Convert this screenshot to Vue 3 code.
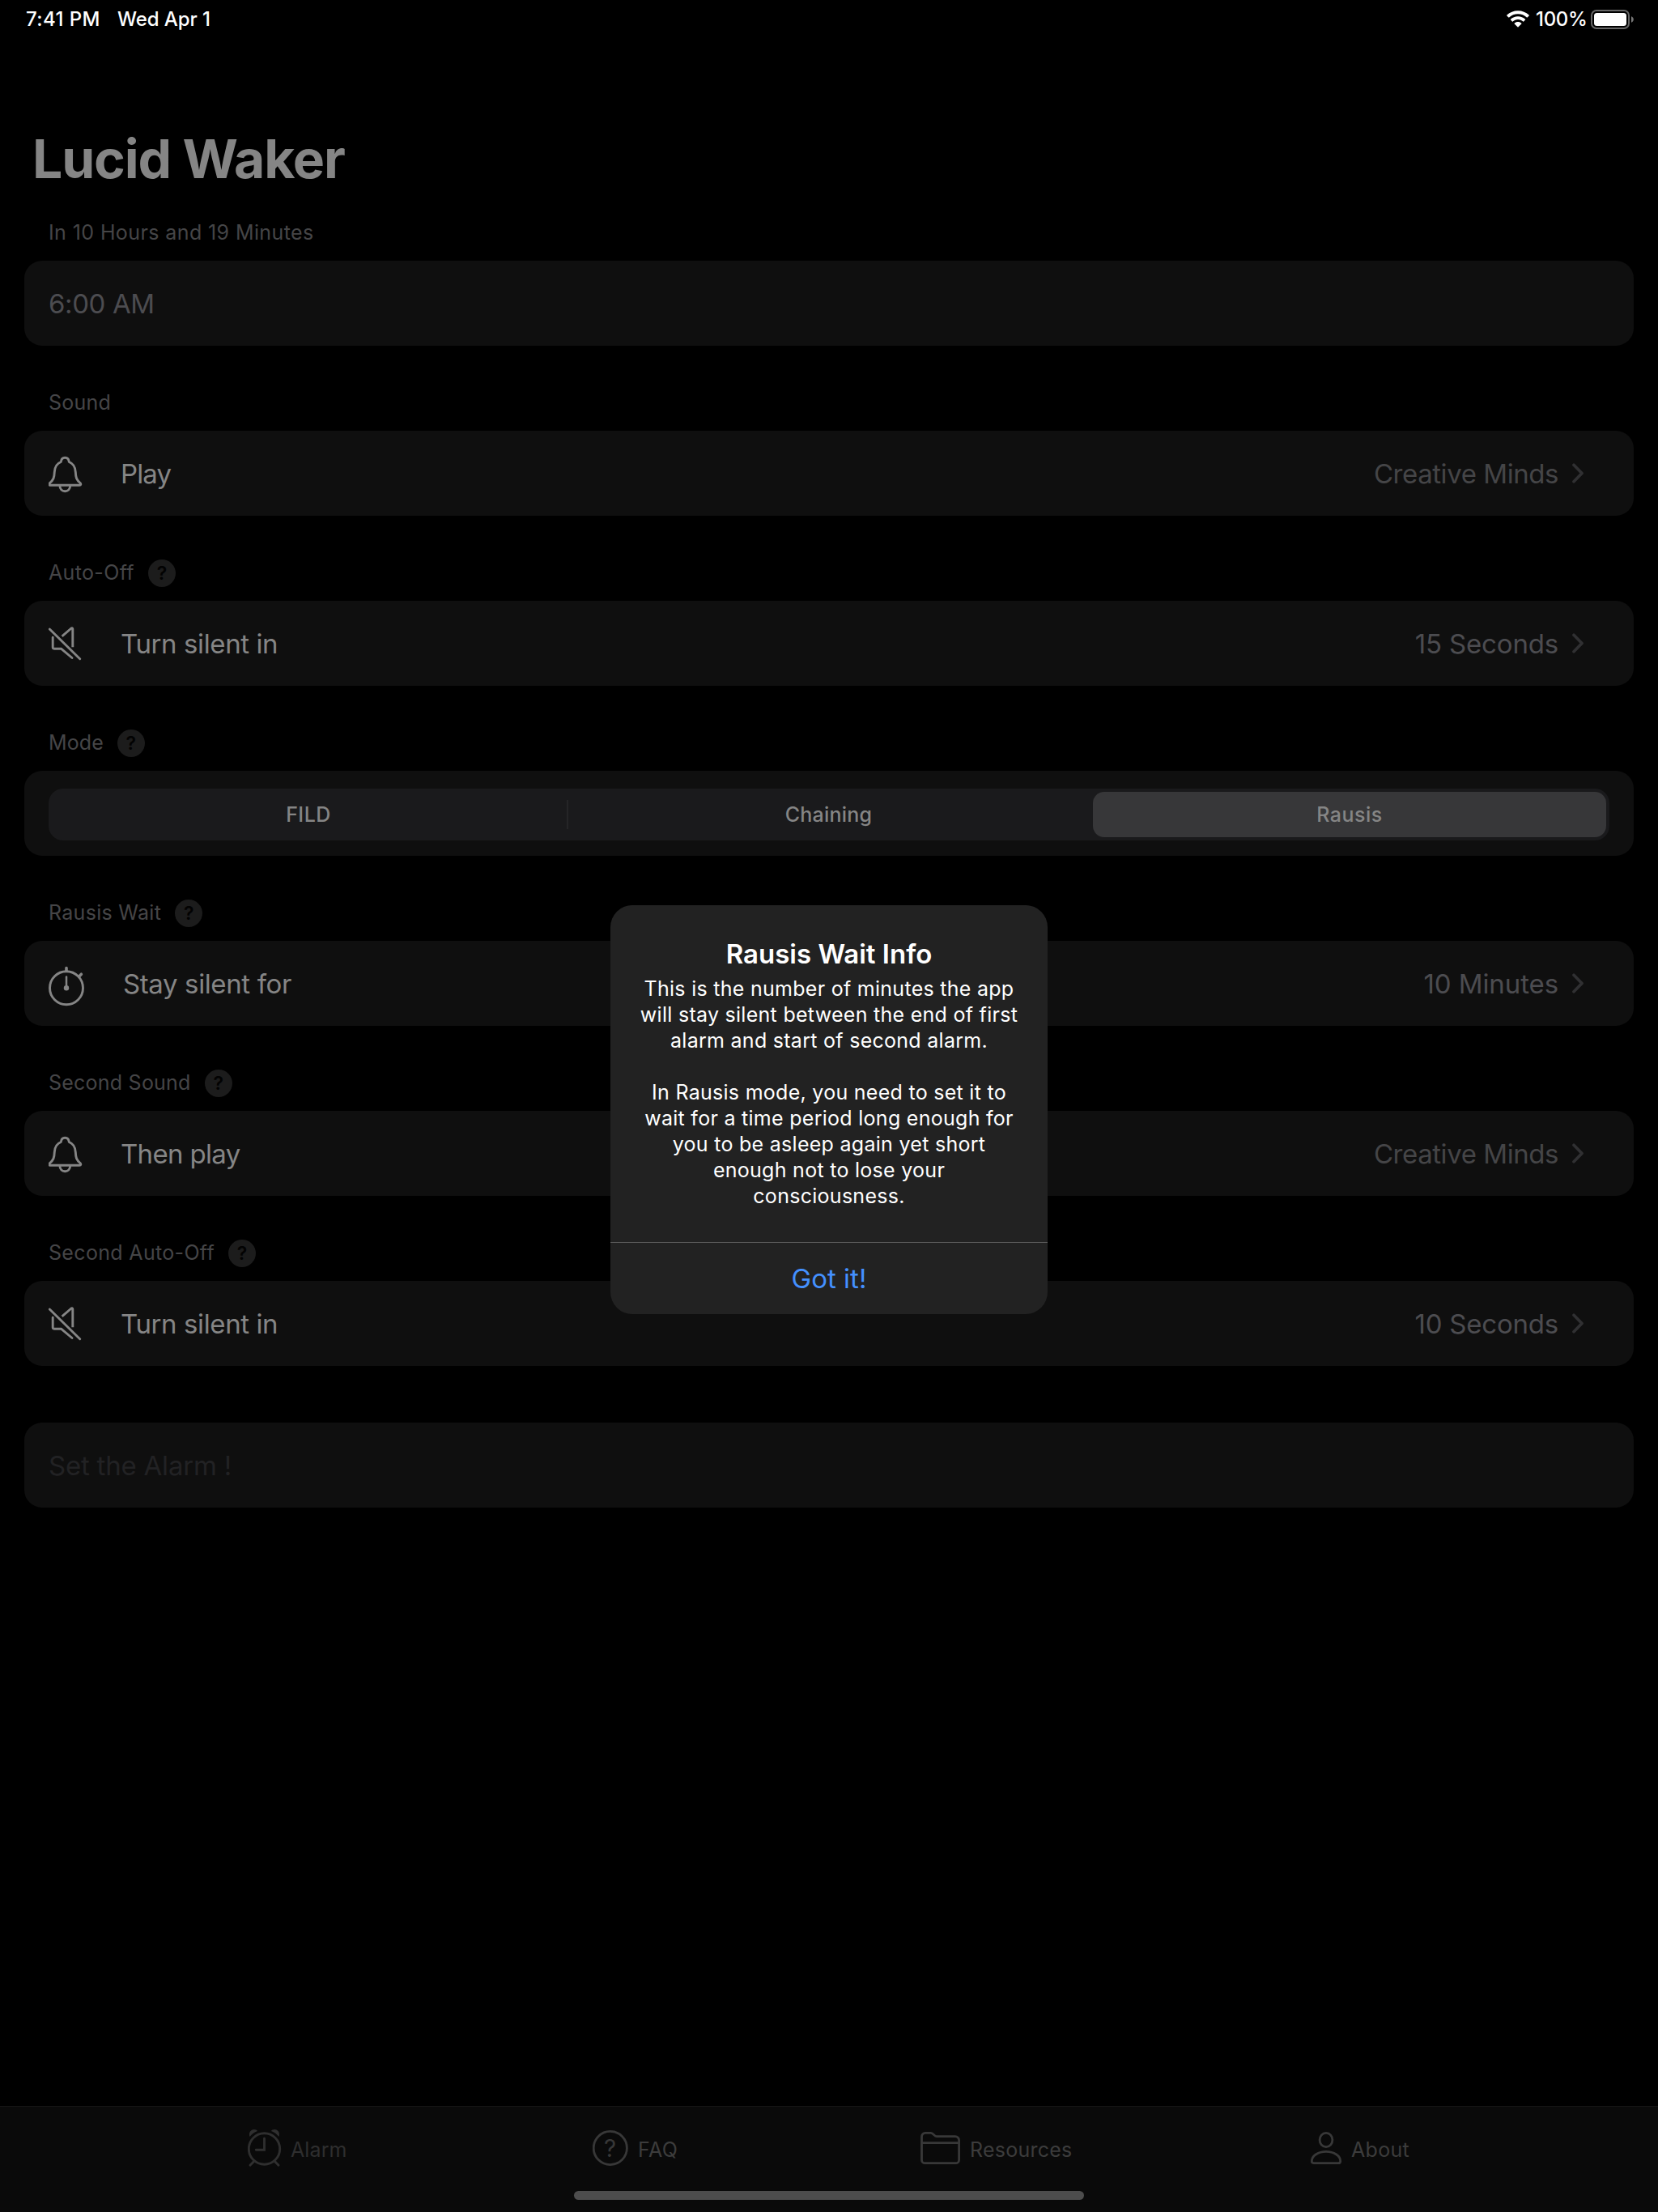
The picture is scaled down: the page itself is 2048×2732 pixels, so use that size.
<script setup>
const sections = [
  { label: 'In 10 Hours and 19 Minutes', ls: 0.4, kind: 'time', title: '6:00 AM', tls: -0.4 },
  { label: 'Sound', ls: 0.23, kind: 'row', icon: 'bell', title: 'Play', tls: -0.9, value: 'Creative Minds', vls: -0.44 },
  { label: 'Auto-Off', ls: 0.35, help: true, kind: 'row', icon: 'mute', title: 'Turn silent in', tls: -0.4, value: '15 Seconds', vls: -0.17, cool: true },
  { label: 'Mode', ls: 0.1, help: true, kind: 'segments' },
  { label: 'Rausis Wait', ls: 0.3, help: true, kind: 'row', icon: 'timer', title: 'Stay silent for', tls: -0.38, value: '10 Minutes', vls: -0.1, cool: true },
  { label: 'Second Sound', ls: 0.23, help: true, kind: 'row', icon: 'bell', title: 'Then play', tls: -0.68, value: 'Creative Minds', vls: -0.44 },
  { label: 'Second Auto-Off', ls: 0.33, help: true, kind: 'row', icon: 'mute', title: 'Turn silent in', tls: -0.4, value: '10 Seconds', vls: -0.22, cool: true }
]
const message = [
  'This is the number of minutes the app',
  'will stay silent between the end of first',
  'alarm and start of second alarm.',
  '',
  'In Rausis mode, you need to set it to',
  'wait for a time period long enough for',
  'you to be asleep again yet short',
  'enough not to lose your',
  'consciousness.'
]
const spacing = (v) => ({ letterSpacing: v + 'px' })
</script>

<template>
  <div class="screen">
    <header class="status">
      <span class="clock">7:41 PM</span>
      <span class="date">Wed Apr 1</span>
      <span class="grow"></span>
      <svg class="wifi" width="28" height="22" viewBox="0 0 28 22" fill="#fff">
        <path d="M14 .2C8.700 .2 4 2.200.4 5.600a.6.6 0 0 0 0 .9L2.300 8.400a.6.6 0 0 0 .8 0C6 5.700 9.800 4.200 14 4.200s8 1.500 10.900 4.200a.6.6 0 0 0 .8 0l1.900-1.900a.6.6 0 0 0 0-.9C24 2.200 19.300 .2 14 .2z" />
        <path d="M14 7.200c-3.500 0-6.600 1.300-9 3.500a.6.6 0 0 0 0 .9l1.900 1.900a.6.6 0 0 0 .8 0C9.400 12 11.600 11 14 11s4.600 1 6.300 2.500a.6.6 0 0 0 .8 0l1.900-1.900a.6.6 0 0 0 0-.9c-2.400-2.200-5.500-3.500-9-3.500z" />
        <path d="M14 14c-1.700 0-3.200.7-4.300 1.700a.6.6 0 0 0 0 .9l3.800 3.700a.7.700 0 0 0 1 0l3.800-3.700a.6.6 0 0 0 0-.9C17.200 14.700 15.700 14 14 14z" />
      </svg>
      <span class="percent">100%</span>
      <svg class="battery" width="53" height="24" viewBox="0 0 53 24">
        <rect x="1" y="1" width="46" height="22" rx="6" fill="none" stroke="#666" stroke-width="2" />
        <rect x="4" y="4" width="40" height="16" rx="3.500" fill="#fff" />
        <path d="M50 8.200c1.700.6 2.800 2 2.800 3.800s-1.100 3.200-2.800 3.800z" fill="#777" />
      </svg>
    </header>

    <h1 class="title">Lucid Waker</h1>

    <main>
      <section v-for="s in sections" :key="s.label" class="section">
        <div class="label">
          <span :style="spacing(s.ls)">{{ s.label }}</span>
          <span v-if="s.help" class="help">?</span>
        </div>

        <div v-if="s.kind === 'segments'" class="card segcard">
          <div class="segments">
            <span class="seg fild">FILD</span>
            <span class="divider"></span>
            <span class="seg chain">Chaining</span>
            <span class="seg on">Rausis</span>
          </div>
        </div>

        <div v-else class="card">
          <svg v-if="s.icon" class="icon" width="89" height="105" viewBox="0 0 89 105" fill="none" stroke="#858585" stroke-width="2.900" stroke-linecap="round" stroke-linejoin="round">
            <template v-if="s.icon === 'bell'">
              <path d="M15.300 38.500C15.500 35.500 17.300 33.200 20.300 33.200s4.800 2.300 5 5.300C30.500 40.500 33 45 33.300 51c.3 7 1.200 9.500 5.700 13.500 1.300 1.500 1 2.800-.8 2.800H2.400c-1.800 0-2.100-1.300-.8-2.800C6.100 60.500 7 58 7.300 51 7.600 45 10.100 40.500 15.300 38.500z" />
              <path d="M13.900 68.300c.2 4 3 6.500 6.400 6.500s6.200-2.500 6.400-6.500" />
            </template>
            <template v-else-if="s.icon === 'mute'">
              <path d="M1.300 35 38.700 71.700" />
              <path d="M16.600 43.800 28 34c1-.8 1.800-.3 1.800.8V57.300" stroke-linecap="butt" />
              <path d="M5.200 45.200V57.600c0 1 .6 1.600 1.600 1.600H15.500L29 70.500" />
            </template>
            <template v-else>
              <circle cx="22" cy="58.300" r="20.500" />
              <path d="M22 33.500V37M37.700 44l2.700-2.800" stroke-width="3.600" />
              <path d="M22 44.500V58" stroke-width="2.500" />
              <circle cx="22" cy="58.300" r="3.200" fill="#858585" stroke="none" />
            </template>
          </svg>
          <span class="name" :class="{ time: s.kind === 'time', late: s.icon === 'timer' }" :style="spacing(s.tls)">{{ s.title }}</span>
          <template v-if="s.value">
            <span class="grow"></span>
            <span class="value" :class="{ cool: s.cool }" :style="spacing(s.vls)">{{ s.value }}</span>
            <svg class="chevron" width="14" height="25" viewBox="0 0 14 25" fill="none" stroke="#303032" stroke-width="3.700" stroke-linecap="round" stroke-linejoin="round">
              <path d="M2 2.300 12 12.500 2 22.700" />
            </svg>
          </template>
        </div>
      </section>

      <div class="card submit"><span>Set the Alarm !</span></div>
    </main>

    <nav class="tabs">
      <div class="tab alarm">
        <svg width="53" height="108" viewBox="0 0 53 108" fill="none" stroke="#2f2f2f" stroke-width="2.900" stroke-linecap="round">
          <circle cx="20.500" cy="53" r="19.200" />
          <path d="M20.500 40.200V54.300H10.300" />
          <path d="M3 73.200 7.300 68.700M38 73.200l-4.300-4.500" />
          <path d="M2.600 38C.6 33.500 3.500 29 8 29c1.800 0 3.500.8 4.100 1.900C8.200 32.300 5 34.600 2.600 38zM38.400 38C40.400 33.500 37.500 29 33 29c-1.800 0-3.500.8-4.100 1.900C32.800 32.300 36 34.600 38.400 38z" fill="#2f2f2f" stroke="none" />
        </svg>
        <span>Alarm</span>
      </div>
      <div class="tab faq">
        <svg width="56" height="108" viewBox="0 0 56 108">
          <circle cx="21.800" cy="52" r="20.600" fill="none" stroke="#383838" stroke-width="2.800" />
          <text x="21.800" y="63" text-anchor="middle" font-family="Inter, sans-serif" font-size="29.500" fill="#383838">?</text>
        </svg>
        <span>FAQ</span>
      </div>
      <div class="tab res">
        <svg width="61" height="108" viewBox="0 0 61 108" fill="none" stroke="#383838" stroke-width="2.800" stroke-linejoin="round">
          <path d="M1.500 38a4.500 4.500 0 0 1 4.500-4.600H12.800C16 33.400 17 37.700 20 37.700H42.800a4.800 4.800 0 0 1 4.800 4.800V66.700a4 4 0 0 1-4 4H5.500a4 4 0 0 1-4-4zM1.500 45.700H47.600" />
        </svg>
        <span>Resources</span>
      </div>
      <div class="tab about">
        <svg width="50" height="108" viewBox="0 0 50 108" fill="none" stroke="#383838" stroke-width="2.800" stroke-linejoin="round">
          <ellipse cx="19" cy="42" rx="7.900" ry="8.700" />
          <path d="M4 70.700H34c2 0 2.700-1.200 2.700-2.500C36.700 61.500 28.500 56.300 19 56.300S1.300 61.500 1.300 68.200c0 1.300.7 2.500 2.700 2.500z" />
        </svg>
        <span>About</span>
      </div>
    </nav>
    <div class="home"></div>

    <div class="alert" role="dialog">
      <h2>Rausis Wait Info</h2>
      <p v-for="(line, i) in message" :key="i">{{ line }}</p>
      <button type="button">Got it!</button>
    </div>
  </div>
</template>

<style>
html, body { margin: 0; background: #000; }
</style>

<style scoped>
.screen {
  position: relative;
  box-sizing: border-box;
  display: flex;
  flex-direction: column;
  width: 2048px;
  height: 2732px;
  overflow: hidden;
  background: #000;
  font-family: Inter, "Liberation Sans", sans-serif;
  white-space: nowrap;
}
.grow { flex: 1; }
.status {
  display: flex;
  align-items: center;
  height: 47px;
  padding: 0 30px 0 32px;
  font-size: 24px;
  font-weight: 500;
  line-height: 47px;
  color: #fff;
}
.clock { width: 113px; letter-spacing: 0.4px; }
.date { letter-spacing: -0.1px; }
.wifi { margin-right: 8px; }
.percent { width: 68px; letter-spacing: -0.3px; }
.title {
  margin: 109px 0 16px 40px;
  font-size: 66px;
  font-weight: 700;
  line-height: 80px;
  letter-spacing: -1.15px;
  color: #858585;
}
main { padding: 0 30px; }
.section { margin-bottom: 35px; }
.label {
  display: flex;
  align-items: center;
  height: 70px;
  padding-left: 30px;
  font-size: 25px;
  color: #454547;
}
.help {
  width: 34px;
  height: 34px;
  margin: 2px 0 0 17px;
  border-radius: 50%;
  background: #1c1c1c;
  color: #020202;
  font-size: 23px;
  font-weight: 600;
  line-height: 34px;
  text-align: center;
}
.card {
  box-sizing: border-box;
  display: flex;
  align-items: center;
  height: 105px;
  padding: 0 62px 0 30px;
  border-radius: 22px;
  background: #0f0f0f;
  font-size: 33px;
}
.icon { flex: none; }
.name { color: #858585; }
.name.time { color: #4c4c50; }
.name.late { margin-left: 3px; }
.value { margin-right: 17px; color: #454547; }
.value.cool { color: #4c4c50; }
.segcard { padding: 0 30px; }
.segments {
  display: flex;
  align-items: center;
  box-sizing: border-box;
  width: 100%;
  height: 64px;
  margin-top: 2px;
  padding: 4px;
  border-radius: 18px;
  background: #1a1a1c;
  font-size: 25px;
  font-weight: 500;
  color: #858585;
}
.seg { text-align: center; }
.fild { width: 636px; letter-spacing: 0.5px; text-indent: -2px; }
.divider { width: 2px; height: 36px; background: #252527; }
.chain { width: 648px; letter-spacing: 0.2px; text-indent: -5px; }
.on {
  flex: 1;
  height: 56px;
  line-height: 56px;
  border-radius: 14px;
  background: #373739;
  letter-spacing: 0.5px;
}
.submit { margin-top: 70px; color: #222224; letter-spacing: -0.22px; }
.tabs {
  display: grid;
  grid-template-columns: 426px 405px 482px 1fr;
  box-sizing: border-box;
  height: 131px;
  margin-top: auto;
  padding-left: 306px;
  background: #0a0a0a;
  box-shadow: inset 0 1px #151515;
  font-size: 25px;
  color: #3c3c3c;
}
.tab { display: flex; align-items: center; height: 108px; }
.alarm { color: #2e2e2e; letter-spacing: 0.1px; }
.faq { letter-spacing: 0.4px; }
.res { letter-spacing: 0.25px; }
.about { letter-spacing: 0.3px; }
.home {
  position: absolute;
  left: 709px;
  top: 2706px;
  width: 630px;
  height: 11px;
  border-radius: 6px;
  background: #4d4d4d;
}
.alert {
  position: absolute;
  left: 754px;
  top: 1118px;
  box-sizing: border-box;
  width: 540px;
  height: 505px;
  padding-top: 40px;
  border-radius: 27px;
  background: #222;
  color: #fff;
  text-align: center;
}
.alert h2 {
  margin: 0 0 7px;
  font-size: 33px;
  font-weight: 600;
  line-height: 40px;
}
.alert p {
  height: 32px;
  margin: 0;
  font-size: 25px;
  line-height: 32px;
  letter-spacing: 0.28px;
}
.alert button {
  display: block;
  width: 100%;
  height: 89px;
  margin-top: 41px;
  padding: 0;
  border: 0;
  border-top: 1px solid #5c5c5c;
  background: none;
  color: #4490ff;
  font: 400 33px Inter, sans-serif;
}
</style>
